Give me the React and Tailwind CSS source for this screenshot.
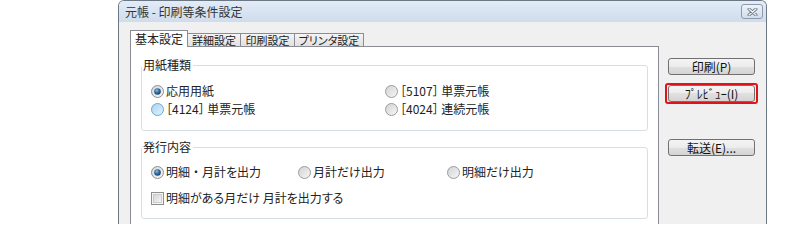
import React from "react";

function Radio({ state = "off" }) {
  if (state === "on") {
    return (
      <svg width="13" height="13" viewBox="0 0 13 13" className="shrink-0">
        <defs>
          <linearGradient id="rOff" x1="0" y1="0" x2="1" y2="1">
            <stop offset="0" stopColor="#d6d6d6" />
            <stop offset="1" stopColor="#f7f7f7" />
          </linearGradient>
          <radialGradient id="rDot" cx="0.4" cy="0.35" r="0.7">
            <stop offset="0" stopColor="#8fc1ea" />
            <stop offset="0.5" stopColor="#2e6a9e" />
            <stop offset="1" stopColor="#153e66" />
          </radialGradient>
        </defs>
        <circle cx="6.5" cy="6.5" r="6" fill="url(#rOff)" stroke="#8c8f94" />
        <circle cx="6.5" cy="6.5" r="3.3" fill="url(#rDot)" />
      </svg>
    );
  }
  if (state === "hover") {
    return (
      <svg width="13" height="13" viewBox="0 0 13 13" className="shrink-0">
        <defs>
          <linearGradient id="rHov" x1="0" y1="0" x2="1" y2="1">
            <stop offset="0" stopColor="#a9d3f0" />
            <stop offset="1" stopColor="#e4f3fd" />
          </linearGradient>
        </defs>
        <circle cx="6.5" cy="6.5" r="6" fill="url(#rHov)" stroke="#6fa6cf" />
      </svg>
    );
  }
  return (
    <svg width="13" height="13" viewBox="0 0 13 13" className="shrink-0">
      <defs>
        <linearGradient id="rOff2" x1="0" y1="0" x2="1" y2="1">
          <stop offset="0" stopColor="#d2d2d2" />
          <stop offset="1" stopColor="#f7f7f7" />
        </linearGradient>
      </defs>
      <circle cx="6.5" cy="6.5" r="6" fill="url(#rOff2)" stroke="#9a9c9f" />
    </svg>
  );
}

function Check() {
  return (
    <svg width="13" height="13" viewBox="0 0 13 13" className="shrink-0">
      <defs>
        <linearGradient id="cb" x1="0" y1="0" x2="1" y2="1">
          <stop offset="0" stopColor="#d4d4d4" />
          <stop offset="1" stopColor="#f6f6f6" />
        </linearGradient>
      </defs>
      <rect x="0.5" y="0.5" width="12" height="12" fill="#f4f4f4" stroke="#8e8f8f" />
      <rect x="2.5" y="2.5" width="8" height="8" fill="url(#cb)" stroke="#c4c4c4" strokeWidth="0.8" />
    </svg>
  );
}

function Opt({ state, children }) {
  return (
    <div className="flex items-center gap-[2px] h-[18px]">
      <Radio state={state} />
      <span className="leading-[14px] whitespace-nowrap">{children}</span>
    </div>
  );
}

function Btn({ children }) {
  return (
    <div className="w-[87px] h-[17px] border border-[#707070] rounded-[3px] bg-[linear-gradient(to_bottom,#f4f4f4_0%,#ececec_50%,#e0e0e0_50%,#d4d4d4_100%)] flex items-center justify-center leading-[14px] text-[#111] whitespace-nowrap">
      {children}
    </div>
  );
}

export default function App() {
  return (
    <div className="w-[800px] h-[240px] bg-white overflow-hidden font-['Noto_Sans_CJK_JP',sans-serif] [font-feature-settings:'palt'] text-[12px] text-[#222]">
      <div className="ml-[118px] w-[649px] h-[224px] flex flex-col border-x border-t border-[#6d7885] rounded-t-[6px] overflow-hidden bg-[#f0f0f0]">
        {/* title bar */}
        <div className="h-[21px] shrink-0 flex items-center justify-between pl-[6px] pr-[3px] bg-gradient-to-b from-[#e3ecf7] to-[#cfdcec]">
          <span className="leading-[14px] text-[#333]">元帳 - 印刷等条件設定</span>
          <div className="w-[22px] h-[15px] border border-[#8d9aab] rounded-[3px] bg-gradient-to-b from-[#eef3f9] to-[#d2deeb] flex items-center justify-center">
            <svg width="11" height="8" viewBox="0 0 11 8">
              <path d="M2 1 L9 7 M9 1 L2 7" stroke="#6a7584" strokeWidth="3" strokeLinecap="round" />
              <path d="M2 1 L9 7 M9 1 L2 7" stroke="#f4f6f9" strokeWidth="1.4" strokeLinecap="round" />
            </svg>
          </div>
        </div>

        {/* client */}
        <div className="flex-1 min-h-0 flex pl-[11px] pt-[8px]">
          {/* tab control */}
          <div className="w-[529px] flex flex-col">
            <div className="h-[17px] flex items-end relative z-10 -mb-px text-[11px] whitespace-nowrap">
              <div className="w-[58px] h-[17px] border-x border-t border-[#898c95] bg-white flex items-center justify-center leading-[14px] text-[12px]">
                基本設定
              </div>
              <div className="w-[54px] h-[13px] mb-px -ml-px border-x border-t border-[#898c95] bg-gradient-to-b from-[#f4f4f4] to-[#e1e1e1] flex items-center justify-center leading-[12px]">
                詳細設定
              </div>
              <div className="w-[55px] h-[13px] mb-px -ml-px border-x border-t border-[#898c95] bg-gradient-to-b from-[#f4f4f4] to-[#e1e1e1] flex items-center justify-center leading-[12px]">
                印刷設定
              </div>
              <div className="w-[70px] h-[13px] mb-px -ml-px border-x border-t border-[#898c95] bg-gradient-to-b from-[#f4f4f4] to-[#e1e1e1] flex items-center justify-center leading-[12px]">
                プリンタ設定
              </div>
            </div>
            <div className="flex-1 border-x border-t border-[#898c95] bg-white pl-[10px] pr-[10px] pt-[11px]">
              <fieldset className="border border-[#d5dfe5] rounded-[3px] px-[9px] pb-[12px]">
                <legend className="-ml-[9px] pl-[1px] pr-[2px] leading-[14px]">用紙種類</legend>
                <div className="mt-[10px] grid grid-cols-[234px_1fr]">
                  <Opt state="on">応用用紙</Opt>
                  <Opt>［5107］ 単票元帳</Opt>
                  <Opt state="hover">［4124］ 単票元帳</Opt>
                  <Opt>［4024］ 連続元帳</Opt>
                </div>
              </fieldset>
              <fieldset className="mt-[9px] border border-[#d5dfe5] rounded-[3px] px-[9px] pb-[11px]">
                <legend className="-ml-[9px] pl-[1px] pr-[2px] leading-[14px]">発行内容</legend>
                <div className="mt-[9px] flex">
                  <div className="w-[147px]">
                    <Opt state="on">
                      明細<span className="[font-feature-settings:normal]">・</span>月計を出力
                    </Opt>
                  </div>
                  <div className="w-[149px]">
                    <Opt>月計だけ出力</Opt>
                  </div>
                  <Opt>明細だけ出力</Opt>
                </div>
                <div className="mt-[8px] flex items-center gap-[2px] h-[18px]">
                  <Check />
                  <span className="leading-[14px]">明細がある月だけ 月計を出力する</span>
                </div>
              </fieldset>
            </div>
          </div>

          {/* buttons */}
          <div className="pl-[9px] pt-[28px] flex flex-col">
            <Btn>印刷(P)</Btn>
            <div className="mt-[8px] -ml-[3px] w-[93px] border-2 border-[#e0131a] rounded-[3px] px-px">
              <Btn>ﾌﾟﾚﾋﾞｭｰ(I)</Btn>
            </div>
            <div className="mt-[35px]">
              <Btn>転送(E)...</Btn>
            </div>
          </div>
        </div>
      </div>
    </div>
  );
}
